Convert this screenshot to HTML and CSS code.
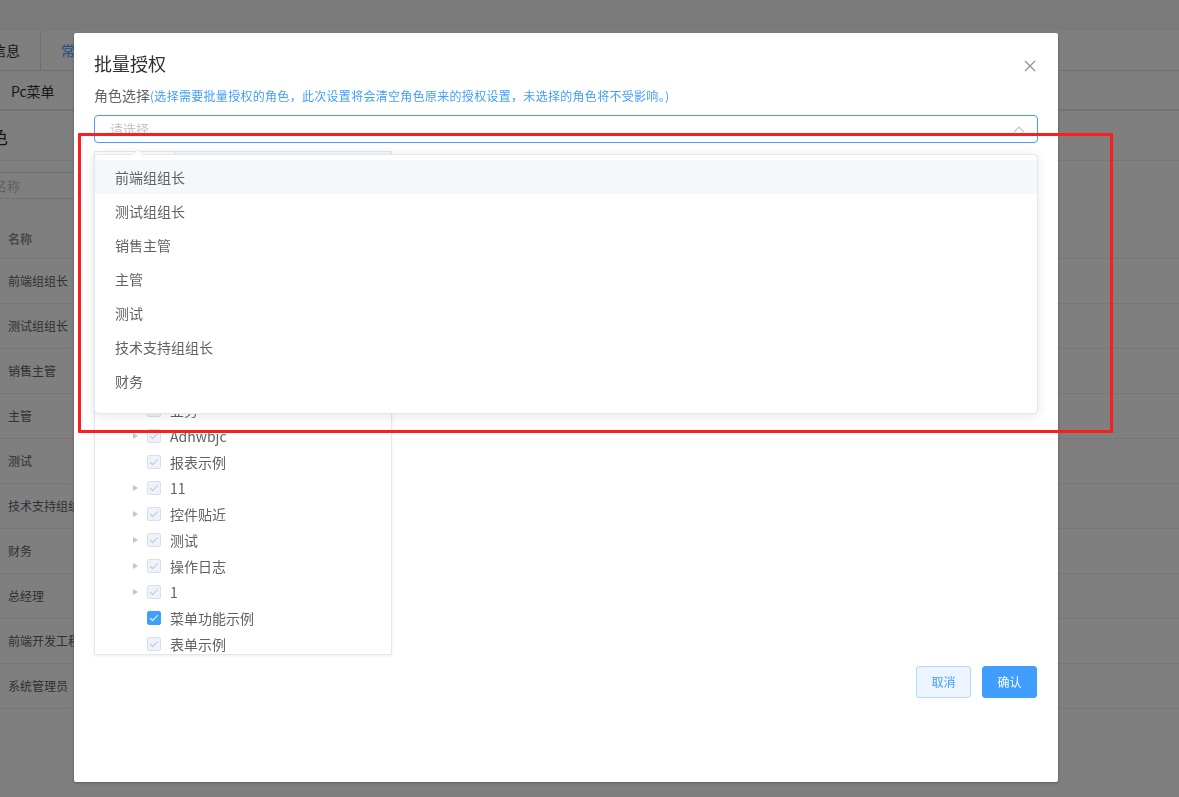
FILE: index.html
```html
<!DOCTYPE html>
<html lang="zh-CN">
<head>
    <meta charset="UTF-8">
    <meta name="viewport" content="width=device-width, initial-scale=1.0">
    <title>批量授权</title>
    <link rel="stylesheet" href="styles.css">
</head>
<body>
    <!-- page behind the dialog -->
    <div class="page">
        <div class="topbar"></div>
        <div class="tabs">
            <div class="tab">基本信息</div>
            <div class="tab active">常用菜单</div>
        </div>
        <div class="subnav"><span>Pc菜单</span></div>
        <div class="heading">角色</div>
        <div class="filter">
            <div class="filter-input">角色名称</div>
        </div>
        <div class="role-table">
            <div class="row head"><span>名称</span></div>
            <div class="row"><span>前端组组长</span></div>
            <div class="row"><span>测试组组长</span></div>
            <div class="row"><span>销售主管</span></div>
            <div class="row"><span>主管</span></div>
            <div class="row"><span>测试</span></div>
            <div class="row"><span>技术支持组组长</span></div>
            <div class="row"><span>财务</span></div>
            <div class="row"><span>总经理</span></div>
            <div class="row"><span>前端开发工程师</span></div>
            <div class="row"><span>系统管理员</span></div>
        </div>
    </div>

    <div class="mask"></div>

    <div class="modal">
        <div class="dialog">
            <div class="dialog-header">
                <span class="dialog-title">批量授权</span>
                <span class="dialog-close">
                    <svg width="12" height="12" viewBox="0 0 12 12"><path d="M1 1 L11 11 M11 1 L1 11" stroke="#909399" stroke-width="1.3" fill="none"/></svg>
                </span>
            </div>

            <div class="dialog-body">
                <div class="field-label">角色选择<span class="hint">(选择需要批量授权的角色，此次设置将会清空角色原来的授权设置，未选择的角色将不受影响。)</span></div>

                <div class="select-wrap">
                    <div class="select">
                        <span class="placeholder">请选择</span>
                        <svg class="select-arrow" width="12" height="7" viewBox="0 0 12 7"><path d="M1 6 L6 1 L11 6" stroke="#c0c4cc" stroke-width="1.2" fill="none"/></svg>
                    </div>
                    <ul class="dropdown">
                        <li class="hover">前端组组长</li>
                        <li>测试组组长</li>
                        <li>销售主管</li>
                        <li>主管</li>
                        <li>测试</li>
                        <li>技术支持组组长</li>
                        <li>财务</li>
                    </ul>
                </div>

                <div class="tree-box">
                    <div class="tree-tabs">
                        <div class="tree-tab active">Pc菜单</div>
                        <div class="tree-tab">App菜单</div>
                    </div>
                    <div class="tree">
                        <div class="node lv1"><i class="caret open"></i><i class="cb"></i>系统管理</div>
                        <div class="node"><i class="caret"></i><i class="cb"></i>用户管理</div>
                        <div class="node"><i class="caret none"></i><i class="cb"></i>角色管理</div>
                        <div class="node"><i class="caret none"></i><i class="cb"></i>菜单管理</div>
                        <div class="node"><i class="caret"></i><i class="cb"></i>部门管理</div>
                        <div class="node"><i class="caret none"></i><i class="cb"></i>字典管理</div>
                        <div class="node lv1"><i class="caret open"></i><i class="cb"></i>业务管理</div>
                        <div class="node"><i class="caret"></i><i class="cb"></i>总经理</div>
                        <div class="node"><i class="caret"></i><i class="cb"></i>业务</div>
                        <div class="node"><i class="caret"></i><i class="cb"></i>Adhwbjc</div>
                        <div class="node"><i class="caret none"></i><i class="cb"></i>报表示例</div>
                        <div class="node"><i class="caret"></i><i class="cb"></i>11</div>
                        <div class="node"><i class="caret"></i><i class="cb"></i>控件贴近</div>
                        <div class="node"><i class="caret"></i><i class="cb"></i>测试</div>
                        <div class="node"><i class="caret"></i><i class="cb"></i>操作日志</div>
                        <div class="node"><i class="caret"></i><i class="cb"></i>1</div>
                        <div class="node"><i class="caret none"></i><i class="cb on"></i>菜单功能示例</div>
                        <div class="node"><i class="caret none"></i><i class="cb"></i>表单示例</div>
                    </div>
                </div>
            </div>

            <div class="dialog-footer">
                <button class="btn btn-plain">取消</button>
                <button class="btn btn-primary">确认</button>
            </div>
        </div>
    </div>

    <!-- annotation drawn over the screenshot -->
    <div class="mark"></div>
</body>
</html>
```

FILE: styles.css
```css
* {
    margin: 0;
    padding: 0;
    box-sizing: border-box;
}

body {
    width: 1179px;
    height: 797px;
    overflow: hidden;
    background: #fff;
    font-family: "Noto Sans CJK SC", "Noto Sans", sans-serif;
    font-size: 12px;
    color: #606266;
}

/* Background page */
.page {
    width: 100%;
}

.topbar {
    height: 31px;
    background: #f4f4f4;
}

.tabs {
    display: flex;
    height: 40px;
    border-bottom: 1px solid #dcdfe6;
}

.tab {
    padding: 0 20px;
    font-size: 14px;
    line-height: 39px;
    color: #303133;
    white-space: nowrap;
}

.tab:first-child {
    margin-left: -56px;
    border-right: 1px solid #dcdfe6;
}

.tab.active {
    color: #409eff;
}

.subnav {
    height: 40px;
    padding: 2px 0 0 11px;
    border-bottom: 2px solid #e4e7ed;
    font-size: 14px;
    line-height: 36px;
    color: #303133;
}

.heading {
    height: 50px;
    border-bottom: 1px solid #ebeef5;
    margin-left: -28px;
    padding-top: 2px;
    font-size: 18px;
    line-height: 46px;
    color: #303133;
}

.filter {
    padding-top: 11px;
    height: 53px;
}

.filter-input {
    width: 240px;
    height: 27px;
    margin-left: -48px;
    padding-left: 15px;
    border: 1px solid #dcdfe6;
    border-radius: 4px;
    font-size: 13px;
    line-height: 25px;
    color: #c0c4cc;
}

.role-table .row {
    height: 45px;
    border-bottom: 1px solid #ebeef5;
    padding-left: 8px;
    line-height: 44px;
    white-space: nowrap;
}

.role-table .row.head {
    padding-top: 6px;
    line-height: 38px;
    color: #909399;
    font-weight: bold;
}

/* Modal */
.mask {
    position: fixed;
    inset: 0;
    background: rgba(0, 0, 0, 0.5);
}

.modal {
    position: fixed;
    inset: 0;
    overflow: hidden;
}

.dialog {
    width: 984px;
    height: 749px;
    margin: 33px 0 0 74px;
    background: #fff;
    border-radius: 2px;
    box-shadow: 0 1px 3px rgba(0, 0, 0, 0.3);
}

.dialog-header {
    display: flex;
    justify-content: space-between;
    align-items: center;
    padding: 18px 20px 10px;
}

.dialog-title {
    font-size: 18px;
    line-height: 24px;
    color: #303133;
}

.dialog-close {
    width: 16px;
    height: 16px;
    display: flex;
    align-items: center;
    justify-content: center;
    margin-top: 5px;
}

.dialog-body {
    padding: 0 20px;
}

.field-label {
    height: 20px;
    font-size: 14px;
    line-height: 20px;
    color: #606266;
    white-space: nowrap;
}

.hint {
    font-size: 12px;
    letter-spacing: 0.3px;
    color: #409eff;
}

.select-wrap {
    position: relative;
    margin-top: 10px;
}

.select {
    height: 28px;
    border: 1px solid #409eff;
    border-radius: 4px;
    padding: 0 30px 0 15px;
    display: flex;
    align-items: center;
    justify-content: space-between;
}

.placeholder {
    font-size: 13px;
    line-height: 24px;
    color: #c0c4cc;
}

.select-arrow {
    margin-right: -18px;
    margin-top: 1px;
}

.dropdown {
    position: absolute;
    top: calc(100% + 11px);
    left: 0;
    right: 0;
    z-index: 10;
    list-style: none;
    background: #fff;
    border: 1px solid #e4e7ed;
    border-radius: 4px;
    box-shadow: 0 2px 12px rgba(0, 0, 0, 0.1);
    padding: 5px 0 15px;
}

.dropdown::before,
.dropdown::after {
    content: "";
    position: absolute;
    left: 37px;
    border: 6px solid transparent;
    border-top-width: 0;
}

.dropdown::before {
    top: -6px;
    border-bottom-color: #e4e7ed;
}

.dropdown::after {
    top: -5px;
    border-bottom-color: #fff;
}

.dropdown li {
    height: 34px;
    padding: 0 20px;
    font-size: 14px;
    line-height: 34px;
    color: #606266;
}

.dropdown li.hover {
    background: #f5f7fa;
}

/* Tree panel */
.tree-box {
    width: 298px;
    height: 504px;
    margin-top: 8px;
    border: 1px solid #e4e7ed;
    box-shadow: 0 1px 3px rgba(0, 0, 0, 0.08);
    overflow: hidden;
}

.tree-tabs {
    display: flex;
    height: 37px;
    background: #f5f7fa;
    border-bottom: 1px solid #e4e7ed;
}

.tree-tab {
    padding: 0 20px;
    line-height: 36px;
    color: #909399;
}

.tree-tab.active {
    width: 80px;
    background: #fff;
    color: #409eff;
    border-right: 1px solid #e4e7ed;
}

.node {
    display: flex;
    align-items: center;
    height: 26px;
    padding-left: 28px;
    font-size: 14px;
    line-height: 25px;
    color: #606266;
    white-space: nowrap;
}

.node.lv1 {
    padding-left: 10px;
}

.caret {
    width: 24px;
    height: 26px;
    display: flex;
    align-items: center;
    justify-content: center;
}

.caret::before {
    content: "";
    border-left: 5px solid #c0c4cc;
    border-top: 3.5px solid transparent;
    border-bottom: 3.5px solid transparent;
}

.caret.open::before {
    transform: rotate(90deg);
}

.caret.none::before {
    border-left-color: transparent;
}

.cb {
    position: relative;
    width: 14px;
    height: 14px;
    margin-right: 9px;
    border: 1px solid #dcdfe6;
    border-radius: 2px;
    background: #edf2fc;
}

.cb::after {
    content: "";
    position: absolute;
    left: 4px;
    top: 1px;
    width: 3px;
    height: 7px;
    border: 1px solid #c0c4cc;
    border-left: 0;
    border-top: 0;
    transform: rotate(45deg);
}

.cb.on {
    background: #409eff;
    border-color: #409eff;
}

.cb.on::after {
    border-color: #fff;
}

.dialog-footer {
    display: flex;
    justify-content: flex-end;
    gap: 11px;
    padding: 11px 21px 11px 20px;
}

.btn {
    font-family: inherit;
    font-size: 12px;
    line-height: 1;
    height: 32px;
    width: 55px;
    border: 1px solid;
    border-radius: 3px;
    cursor: pointer;
}

.btn-plain {
    background: #ecf5ff;
    border-color: #b3d8ff;
    color: #409eff;
}

.btn-primary {
    background: #409eff;
    border-color: #409eff;
    color: #fff;
}

/* Red highlight box */
.mark {
    position: fixed;
    left: 78px;
    top: 133px;
    width: 1035px;
    height: 300px;
    border: 3px solid #fa1e1e;
    border-radius: 1px;
    pointer-events: none;
}
```
